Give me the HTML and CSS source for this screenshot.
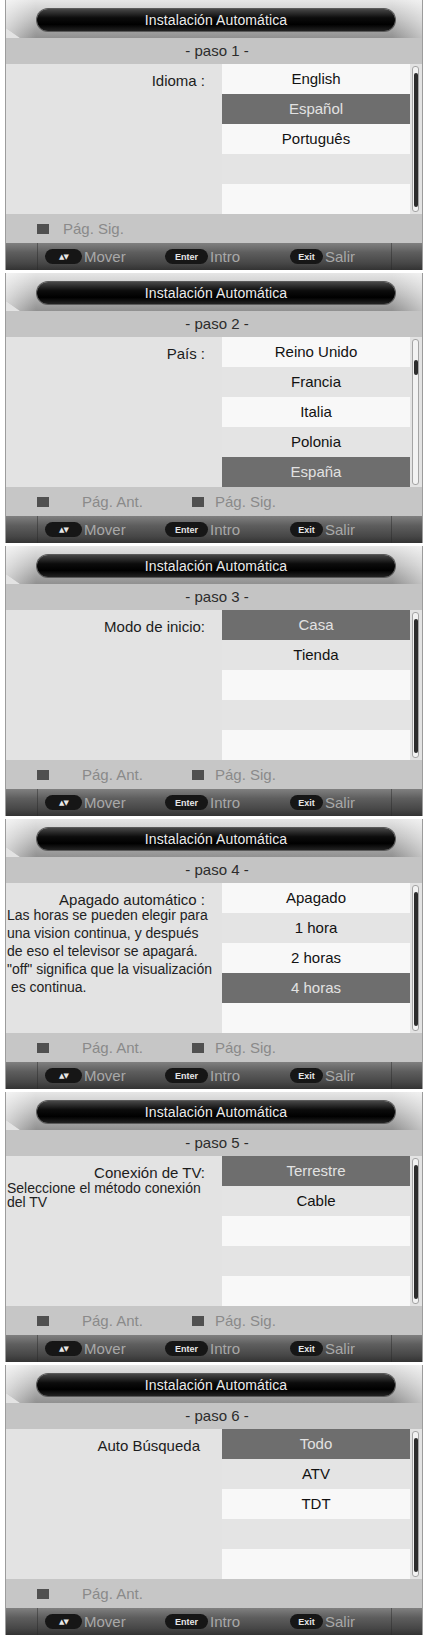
FILE: index.html
```html
<!DOCTYPE html>
<html lang="es">
<head>
<meta charset="utf-8">
<title>Instalación Automática</title>
<link rel="stylesheet" href="styles.css">
</head>
<body>
<main class="page">

  <section class="panel">
    <header class="hdr"><div class="title">Instalación Automática</div></header>
    <div class="step">- paso 1 -</div>
    <div class="body">
      <div class="left"><div class="label">Idioma :</div></div>
      <ul class="list">
        <li>English</li><li class="sel">Español</li><li>Português</li><li></li><li></li>
      </ul>
      <div class="scroll"><div class="track"><div class="thumb full"></div></div></div>
    </div>
    <div class="keys">
      <div class="item sig only"><span class="sq"></span><span>Pág. Sig.</span></div>
    </div>
    <div class="nav"><div class="nav-inner">
      <div class="grp"><span class="key k-move">▲▼</span><span class="lbl">Mover</span></div>
      <div class="grp"><span class="key k-enter">Enter</span><span class="lbl">Intro</span></div>
      <div class="grp"><span class="key k-exit">Exit</span><span class="lbl">Salir</span></div>
    </div></div>
  </section>

  <section class="panel">
    <header class="hdr"><div class="title">Instalación Automática</div></header>
    <div class="step">- paso 2 -</div>
    <div class="body">
      <div class="left"><div class="label">País :</div></div>
      <ul class="list">
        <li>Reino Unido</li><li>Francia</li><li>Italia</li><li>Polonia</li><li class="sel">España</li>
      </ul>
      <div class="scroll"><div class="track"><div class="thumb small"></div></div></div>
    </div>
    <div class="keys">
      <div class="item ant"><span class="sq"></span><span>Pág. Ant.</span></div>
      <div class="item sig"><span class="sq"></span><span>Pág. Sig.</span></div>
    </div>
    <div class="nav"><div class="nav-inner">
      <div class="grp"><span class="key k-move">▲▼</span><span class="lbl">Mover</span></div>
      <div class="grp"><span class="key k-enter">Enter</span><span class="lbl">Intro</span></div>
      <div class="grp"><span class="key k-exit">Exit</span><span class="lbl">Salir</span></div>
    </div></div>
  </section>

  <section class="panel">
    <header class="hdr"><div class="title">Instalación Automática</div></header>
    <div class="step">- paso 3 -</div>
    <div class="body">
      <div class="left"><div class="label">Modo de inicio:</div></div>
      <ul class="list">
        <li class="sel">Casa</li><li>Tienda</li><li></li><li></li><li></li>
      </ul>
      <div class="scroll"><div class="track"><div class="thumb full"></div></div></div>
    </div>
    <div class="keys">
      <div class="item ant"><span class="sq"></span><span>Pág. Ant.</span></div>
      <div class="item sig"><span class="sq"></span><span>Pág. Sig.</span></div>
    </div>
    <div class="nav"><div class="nav-inner">
      <div class="grp"><span class="key k-move">▲▼</span><span class="lbl">Mover</span></div>
      <div class="grp"><span class="key k-enter">Enter</span><span class="lbl">Intro</span></div>
      <div class="grp"><span class="key k-exit">Exit</span><span class="lbl">Salir</span></div>
    </div></div>
  </section>

  <section class="panel">
    <header class="hdr"><div class="title">Instalación Automática</div></header>
    <div class="step">- paso 4 -</div>
    <div class="body">
      <div class="left">
        <div class="label">Apagado automático :</div>
        <div class="desc d4">Las horas se pueden elegir para<br>una vision continua, y después<br>de eso el televisor se apagará.<br>"off" significa que la visualización<br>&nbsp;es continua.</div>
      </div>
      <ul class="list">
        <li>Apagado</li><li>1 hora</li><li>2 horas</li><li class="sel">4 horas</li><li></li>
      </ul>
      <div class="scroll"><div class="track"><div class="thumb full"></div></div></div>
    </div>
    <div class="keys">
      <div class="item ant"><span class="sq"></span><span>Pág. Ant.</span></div>
      <div class="item sig"><span class="sq"></span><span>Pág. Sig.</span></div>
    </div>
    <div class="nav"><div class="nav-inner">
      <div class="grp"><span class="key k-move">▲▼</span><span class="lbl">Mover</span></div>
      <div class="grp"><span class="key k-enter">Enter</span><span class="lbl">Intro</span></div>
      <div class="grp"><span class="key k-exit">Exit</span><span class="lbl">Salir</span></div>
    </div></div>
  </section>

  <section class="panel">
    <header class="hdr"><div class="title">Instalación Automática</div></header>
    <div class="step">- paso 5 -</div>
    <div class="body">
      <div class="left">
        <div class="label">Conexión de TV:</div>
        <div class="desc d5">Seleccione el método conexión<br>del TV</div>
      </div>
      <ul class="list">
        <li class="sel">Terrestre</li><li>Cable</li><li></li><li></li><li></li>
      </ul>
      <div class="scroll"><div class="track"><div class="thumb full"></div></div></div>
    </div>
    <div class="keys">
      <div class="item ant"><span class="sq"></span><span>Pág. Ant.</span></div>
      <div class="item sig"><span class="sq"></span><span>Pág. Sig.</span></div>
    </div>
    <div class="nav"><div class="nav-inner">
      <div class="grp"><span class="key k-move">▲▼</span><span class="lbl">Mover</span></div>
      <div class="grp"><span class="key k-enter">Enter</span><span class="lbl">Intro</span></div>
      <div class="grp"><span class="key k-exit">Exit</span><span class="lbl">Salir</span></div>
    </div></div>
  </section>

  <section class="panel">
    <header class="hdr"><div class="title">Instalación Automática</div></header>
    <div class="step">- paso 6 -</div>
    <div class="body">
      <div class="left"><div class="label l6">Auto Búsqueda</div></div>
      <ul class="list">
        <li class="sel">Todo</li><li>ATV</li><li>TDT</li><li></li><li></li>
      </ul>
      <div class="scroll"><div class="track"><div class="thumb full"></div></div></div>
    </div>
    <div class="keys">
      <div class="item ant"><span class="sq"></span><span>Pág. Ant.</span></div>
    </div>
    <div class="nav"><div class="nav-inner">
      <div class="grp"><span class="key k-move">▲▼</span><span class="lbl">Mover</span></div>
      <div class="grp"><span class="key k-enter">Enter</span><span class="lbl">Intro</span></div>
      <div class="grp"><span class="key k-exit">Exit</span><span class="lbl">Salir</span></div>
    </div></div>
  </section>

</main>
</body>
</html>
```
FILE: styles.css
```css
* { box-sizing: border-box; }

body {
  margin: 0;
  background: #ffffff;
  font-family: "Liberation Sans", Arial, sans-serif;
}

.page {
  width: 418px;
  margin-left: 5px;
  display: flex;
  flex-direction: column;
  gap: 3px;
}

.panel {
  height: 270px;
  display: flex;
  flex-direction: column;
  border-left: 1px solid #9c9c9c;
  border-right: 1px solid #9c9c9c;
  background: #e3e3e3;
  overflow: hidden;
}

/* header */
.hdr {
  flex: none;
  height: 38px;
  padding: 9px 27px 0 31px;
  background:
    linear-gradient(90deg, rgba(255,255,255,0.55) 0, rgba(255,255,255,0) 30px, rgba(255,255,255,0) calc(100% - 30px), rgba(255,255,255,0.45) 100%),
    linear-gradient(180deg, #e6e6e6 0%, #bdbdbd 50%, #909090 100%);
  clip-path: polygon(0 0, 100% 0, 100% 100%, 14px 100%, 0 calc(100% - 10px));
}

.title {
  height: 22px;
  border-radius: 11px;
  background: linear-gradient(180deg, #474747 0%, #0c0c0c 40%, #000 70%, #222 100%);
  box-shadow: 0 0 0 1px #5a5a5a;
  color: #ececec;
  font-size: 14px;
  line-height: 22px;
  text-align: center;
  letter-spacing: 0.1px;
}

/* step bar */
.step {
  flex: none;
  height: 26px;
  background: #c4c4c4;
  color: #2c2c2c;
  font-size: 15px;
  line-height: 26px;
  text-align: center;
  padding-left: 6px;
}

/* body */
.body {
  flex: none;
  height: 150px;
  display: grid;
  grid-template-columns: 216px 188px 12px;
}

.left {
  padding: 3px 17px 0 0;
}

.label {
  text-align: right;
  font-size: 15px;
  line-height: 28px;
  color: #1c1c1c;
}

.label.l6 { padding-right: 5px; }

.desc {
  text-align: left;
  white-space: nowrap;
  font-size: 14px;
  color: #222;
  margin-left: 1px;
  margin-right: -17px;
}

.desc.d4 { margin-top: -8px; line-height: 18px; }
.desc.d5 { margin-top: -6px; line-height: 14px; }

.list {
  list-style: none;
  margin: 0;
  padding: 0;
  display: grid;
  grid-template-rows: repeat(5, 30px);
}

.list li {
  text-align: center;
  font-size: 15px;
  line-height: 30px;
  color: #121212;
}

.list li:nth-child(odd) { background: #f8f8f8; }
.list li:nth-child(even) { background: #e4e4e4; }

.list li.sel {
  background: #6e6e6e;
  color: #e2e2e2;
}

.scroll {
  padding: 2px 0 2px 2px;
}

.track {
  width: 7px;
  height: 100%;
  border: 1px solid #a4a4a4;
  border-radius: 3px;
  background: #f2f2f2;
  display: flex;
  justify-content: center;
}

.thumb {
  width: 4px;
  background: #2c2c2c;
  border-radius: 2px;
}

.thumb.full { margin-top: 6px; height: calc(100% - 10px); }
.thumb.small { margin-top: 20px; height: 15px; }

/* colour key bar */
.keys {
  flex: none;
  height: 29px;
  background: #c6c6c6;
  display: flex;
  align-items: center;
  padding-left: 31px;
  font-size: 15px;
  color: #8a8a8a;
}

.item {
  display: flex;
  align-items: center;
}

.item.ant { width: 155px; gap: 33px; }
.item.sig { gap: 11px; }
.item.sig.only { gap: 14px; }

.sq {
  width: 12px;
  height: 10px;
  background: #505050;
}

/* navigation bar */
.nav {
  flex: none;
  height: 27px;
  display: flex;
  background: linear-gradient(180deg, #808080 0%, #5e5e5e 35%, #474747 75%, #333 100%);
}

.nav-inner {
  flex: 1;
  margin: 0 30px 0 31px;
  border-left: 1px solid rgba(40,40,40,0.45);
  border-right: 1px solid rgba(40,40,40,0.45);
  padding-left: 7px;
  display: grid;
  grid-template-columns: 120px 125px auto;
  align-items: center;
}

.grp {
  display: flex;
  align-items: center;
  gap: 2px;
}

.key {
  height: 15px;
  border-radius: 8px;
  background: #161616;
  color: #e6e6e6;
  font-size: 9px;
  font-weight: bold;
  display: flex;
  align-items: center;
  justify-content: center;
}

.k-move { width: 37px; font-family: "DejaVu Sans", sans-serif; font-size: 7px; letter-spacing: -1px; }
.k-enter { width: 43px; }
.k-exit { width: 33px; }

.lbl {
  font-size: 15px;
  color: #a8a8a8;
}
```
